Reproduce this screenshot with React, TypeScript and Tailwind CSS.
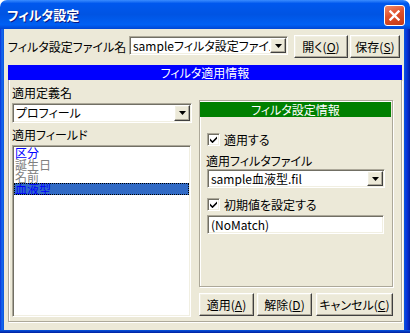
import type { ReactNode } from 'react'

const sunken =
  'bg-white border border-t-[#ACA899] border-l-[#ACA899] border-r-white border-b-white shadow-[inset_1px_1px_0_#716F64,inset_-1px_-1px_0_#F1EFE2]'
const raised =
  'bg-[#ECE9D8] border border-t-white border-l-white border-r-[#404040] border-b-[#404040] shadow-[inset_-1px_-1px_0_#ACA899,inset_1px_1px_0_#F1EFE2]'

function Combo({ className, text }: { className: string; text: string }) {
  return (
    <div className={`${sunken} ${className} flex items-stretch p-[1px]`}>
      <div className="flex-1 min-w-0 overflow-hidden whitespace-nowrap pl-[2px] flex items-center leading-[14px]">{text}</div>
      <div className={`${raised} w-[16px] shrink-0 flex items-center justify-center`}>
        <svg width="7" height="4" viewBox="0 0 7 4">
          <path d="M0 0h7L3.5 4z" fill="black" />
        </svg>
      </div>
    </div>
  )
}

function Check({ label }: { label: string }) {
  return (
    <div className="flex items-center h-[13px] gap-[4px]">
      <div className={`${sunken} w-[13px] h-[13px] shrink-0 flex items-center justify-center`}>
        <svg width="7" height="7" viewBox="0 0 7 7">
          <polygon points="0,2.5 2.5,5 7,0.5 7,2.8 2.5,7.2 0,4.7" fill="black" />
        </svg>
      </div>
      <span className="leading-[13px]">{label}</span>
    </div>
  )
}

function Btn({ className, children }: { className: string; children: ReactNode }) {
  return <div className={`${raised} ${className} h-[23px] flex items-center justify-center leading-[14px]`}>{children}</div>
}

const fields = [
  { name: '区分', color: 'text-[#0000FF]', sel: false },
  { name: '誕生日', color: 'text-[#808080]', sel: false },
  { name: '名前', color: 'text-[#808080]', sel: false },
  { name: '血液型', color: 'text-[#0000FF]', sel: true },
]

export default function App() {
  return (
    <div className="w-[410px] h-[333px] bg-white text-[12px] text-black font-['Noto_Sans_CJK_JP',sans-serif] [font-feature-settings:'palt']">
      {/* title bar */}
      <div className="h-[29px] rounded-t-[7px] bg-[linear-gradient(180deg,#3A8CFF_0%,#0058EE_12%,#0054E3_50%,#0060F4_85%,#0046D4_100%)] flex items-center pl-[7px] pr-[5px] pt-[1px]">
        <span className="flex-1 text-white font-bold text-[13px] leading-[16px] [text-shadow:1px_1px_0_#0A1883]">フィルタ設定</span>
        <div className="w-[21px] h-[21px] rounded-[3px] border border-white bg-[linear-gradient(160deg,#F08A6A_0%,#E0502B_45%,#C23A17_100%)] flex items-center justify-center">
          <svg width="11" height="11" viewBox="0 0 11 11">
            <path d="M1.5 1.5l8 8M9.5 1.5l-8 8" stroke="white" strokeWidth="2.4" strokeLinecap="square" />
          </svg>
        </div>
      </div>

      <div className="flex h-[301px]">
        <div className="w-[4px] bg-[linear-gradient(90deg,#0831D9,#166AEE,#0855DD)]" />
        <div className="w-[400px] bg-[#ECE9D8] flex flex-col">
          {/* file row */}
          <div className="mt-[6px] h-[23px] flex pl-[4px]">
            <div className="w-[121px] self-center whitespace-nowrap leading-[14px]">フィルタ設定ファイル名</div>
            <Combo className="w-[159px] h-[19px] mt-[1px]" text="sampleフィルタ設定ファイル" />
            <Btn className="ml-[6px] w-[54px]">
              開く(<u>O</u>)
            </Btn>
            <Btn className="ml-[2px] w-[50px]">
              保存(<u>S</u>)
            </Btn>
          </div>

          <div className="mt-[7px] ml-[4px] w-[394px] h-[15px] bg-[#0000FF] text-white text-center leading-[15px]">フィルタ適用情報</div>

          <div className="ml-[4px] w-[394px] h-[242px] border-x border-b border-[#ACA899] shadow-[inset_1px_0_0_white,1px_1px_0_white] flex">
            {/* left column */}
            <div className="ml-[3px] w-[180px] flex flex-col">
              <div className="mt-[7px] h-[12px] leading-[12px]">適用定義名</div>
              <Combo className="mt-[4px] w-[180px] h-[20px]" text="プロフィール" />
              <div className="mt-[6px] h-[12px] leading-[12px]">適用フィールド</div>
              <div className={`${sunken} mt-[4px] w-[179px] h-[172px] p-[1px]`}>
                {fields.map(f => (
                  <div
                    key={f.name}
                    className={`h-[12px] leading-[12px] pl-[1px] ${f.color} ${f.sel ? 'bg-[#316AC5] outline-1 outline-dotted outline-offset-[-1px] outline-black' : ''}`}
                  >
                    {f.name}
                  </div>
                ))}
              </div>
            </div>

            {/* right column */}
            <div className="ml-[7px] flex flex-col">
              <div className="mt-[20px] w-[194px] h-[187px] border border-[#ACA899] shadow-[inset_1px_1px_0_white,1px_1px_0_white] flex flex-col">
                <div className="mt-[1px] w-[191px] h-[15px] bg-[#008000] text-white text-center leading-[15px]">フィルタ設定情報</div>
                <div className="mt-[16px] ml-[7px]">
                  <Check label="適用する" />
                </div>
                <div className="mt-[9px] ml-[6px] h-[12px] leading-[12px]">適用フィルタファイル</div>
                <Combo className="mt-[2px] ml-[7px] w-[178px] h-[19px]" text="sample血液型.fil" />
                <div className="mt-[10px] ml-[7px]">
                  <Check label="初期値を設定する" />
                </div>
                <div className={`${sunken} mt-[4px] ml-[7px] w-[177px] h-[19px] pl-[3px] flex items-center leading-[14px]`}>(NoMatch)</div>
              </div>
              <div className="mt-[6px] flex">
                <Btn className="w-[55px]">
                  適用(<u>A</u>)
                </Btn>
                <Btn className="ml-[3px] w-[55px]">
                  解除(<u>D</u>)
                </Btn>
                <Btn className="ml-[4px] w-[77px]">
                  キャンセル(<u>C</u>)
                </Btn>
              </div>
            </div>
          </div>
        </div>
        <div className="w-[6px] bg-[linear-gradient(90deg,#0855DD,#0831D9,#001EA0)]" />
      </div>
      <div className="h-[3px] bg-[linear-gradient(180deg,#0855DD,#001EA0)]" />
    </div>
  )
}
